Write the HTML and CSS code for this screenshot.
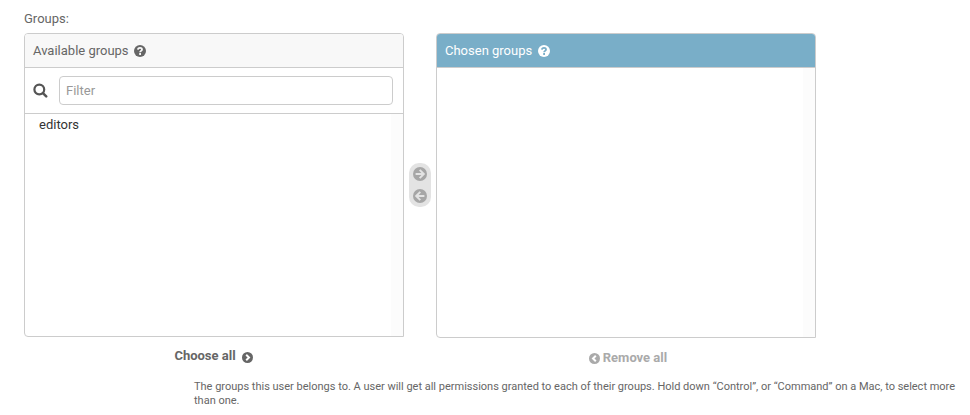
FILE: index.html
```html
<!DOCTYPE html>
<html lang="en">
<head>
<meta charset="utf-8">
<title>Groups</title>
<link rel="stylesheet" href="styles.css">
</head>
<body>
<div class="form-row">
  <label class="field-label">Groups:</label>
  <div class="selector">
    <div class="column">
      <div class="panel available">
        <h2>Available groups
          <svg class="help" viewBox="0 0 12 12"><circle cx="6" cy="6" r="6" fill="#666"/><path d="M3.9 4.6C4.1 2.1 8.2 2.3 8 4.6C7.9 5.9 6.1 5.9 6.1 7.3M6.1 8.1V9.9" fill="none" stroke="#f8f8f8" stroke-width="1.8"/></svg>
        </h2>
        <div class="filter">
          <svg class="search" viewBox="0 0 15 15"><circle cx="6.3" cy="6.5" r="4.9" fill="none" stroke="#555" stroke-width="2.2"/><path d="M9.9 10.1L13.2 13.4" stroke="#555" stroke-width="2.5" stroke-linecap="round"/></svg>
          <input type="text" placeholder="Filter">
        </div>
        <div class="list"><div class="option">editors</div></div>
      </div>
      <a class="action choose">Choose all
        <svg viewBox="0 0 11 11"><circle cx="5.5" cy="5.5" r="5.5" fill="#666"/><path d="M4.2 2.7L7 5.5L4.2 8.3" fill="none" stroke="#fff" stroke-width="2"/></svg>
      </a>
    </div>
    <div class="chooser">
      <svg viewBox="0 0 14 14"><circle cx="7" cy="7" r="7" fill="#a6a6a6"/><path d="M2.6 7H10.4M6.7 2.9L10.8 7L6.7 11.1" fill="none" stroke="#e3e3e3" stroke-width="2"/></svg>
      <svg viewBox="0 0 14 14"><circle cx="7" cy="7" r="7" fill="#a6a6a6"/><path d="M11.4 7H3.6M7.3 2.9L3.2 7L7.3 11.1" fill="none" stroke="#e3e3e3" stroke-width="2"/></svg>
    </div>
    <div class="column">
      <div class="panel chosen">
        <h2>Chosen groups
          <svg class="help" viewBox="0 0 12 12"><circle cx="6" cy="6" r="6" fill="#fff"/><path d="M3.9 4.6C4.1 2.1 8.2 2.3 8 4.6C7.9 5.9 6.1 5.9 6.1 7.3M6.1 8.1V9.9" fill="none" stroke="#79aec8" stroke-width="1.8"/></svg>
        </h2>
        <div class="list"></div>
      </div>
      <a class="action remove">
        <svg viewBox="0 0 11 11"><circle cx="5.5" cy="5.5" r="5.5" fill="#aaa"/><path d="M6.8 2.7L4 5.5L6.8 8.3" fill="none" stroke="#fff" stroke-width="2"/></svg>
        Remove all</a>
    </div>
  </div>
  <p class="help-text">The groups this user belongs to. A user will get all permissions granted to each of their groups. Hold down “Control”, or “Command” on a Mac, to select more than one.</p>
</div>
</body>
</html>
```
FILE: styles.css
```css
* { box-sizing: border-box; }
body {
  margin: 0;
  background: #fff;
  color: #666;
  font: 13px/16px Roboto, "Liberation Sans", sans-serif;
}
svg { display: block; flex: none; }
.form-row { padding: 11px 10px 0 24px; }
.field-label { display: block; height: 22px; }
.selector { display: flex; height: 340px; }
.column { width: 380px; }
.panel {
  display: flex;
  flex-direction: column;
  border: 1px solid #ccc;
  border-radius: 4px 4px 0 4px;
  overflow: hidden;
}
.available { height: 304px; }
.chosen { height: 305px; }
.panel h2 {
  display: flex;
  align-items: center;
  gap: 5.5px;
  height: 34px;
  margin: 0;
  padding: 0 8px;
  border-bottom: 1px solid #ccc;
  background: #f8f8f8;
  font-size: 13px;
  font-weight: 400;
}
.chosen h2 { background: #79aec8; color: #fff; }
.help { width: 12px; height: 12px; }
.filter {
  display: flex;
  align-items: center;
  height: 46px;
  padding: 0 10px 0 8px;
  border-bottom: 1px solid #ccc;
}
.search { width: 15px; height: 15px; margin-right: 11px; }
.filter input {
  flex: 1;
  height: 29px;
  padding: 0 6px;
  border: 1px solid #ccc;
  border-radius: 4px;
  background: #fff;
  font: inherit;
}
.filter input::placeholder { color: #999; }
.list {
  flex: 1;
  padding: 3px 14px;
  background: linear-gradient(#fcfcfc, #fcfcfc) right / 12px 100% no-repeat;
  color: #333;
}
.chooser {
  width: 22px;
  height: 44px;
  margin: 130px 5px 0;
  padding: 4px;
  border-radius: 10px;
  background: #e3e3e3;
  display: flex;
  flex-direction: column;
  gap: 8px;
}
.chooser svg { width: 14px; height: 14px; }
.action {
  display: flex;
  align-items: center;
  justify-content: center;
  height: 16px;
  font-weight: 700;
}
.action svg { width: 11px; height: 11px; }
.choose { margin-top: 11px; padding-right: 1px; gap: 6px; }
.choose svg { margin-top: 2px; }
.remove { margin-top: 12px; padding-left: 4px; gap: 3px; color: #aaa; }
.help-text {
  margin: 7px 0 0 170px;
  font-size: 11px;
  line-height: 14px;
  letter-spacing: -0.005px;
}
```
